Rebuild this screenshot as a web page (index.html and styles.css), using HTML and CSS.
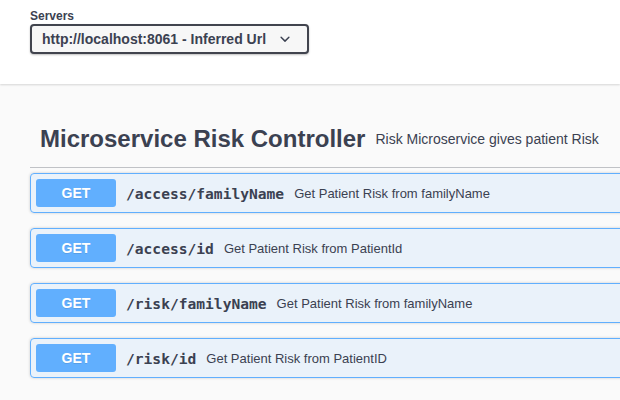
FILE: index.html
```html
<!DOCTYPE html>
<html>
<head>
<meta charset="utf-8">
<link rel="stylesheet" href="styles.css">
</head>
<body>
<section class="scheme">
  <div class="servers">
    <span class="label">Servers</span>
    <div class="select">
      <span class="select-text">http://localhost:8061 - Inferred Url</span>
      <svg class="chev" viewBox="0 0 20 20" width="20" height="20"><path d="M13.418 7.859a.695.695 0 01.978 0 .68.68 0 010 .969l-3.908 3.83a.697.697 0 01-.979 0l-3.908-3.83a.68.68 0 010-.969.695.695 0 01.978 0L10 11z" fill="#3b4151"/></svg>
    </div>
  </div>
</section>
<main class="wrapper">
  <h4 class="tag">
    <span class="tag-name">Microservice Risk Controller</span>
    <small class="tag-desc">Risk Microservice gives patient Risk</small>
  </h4>
  <div class="ops">
    <div class="op">
      <span class="method">GET</span>
      <span class="path">/access/familyName</span>
      <span class="desc">Get Patient Risk from familyName</span>
    </div>
    <div class="op">
      <span class="method">GET</span>
      <span class="path">/access/id</span>
      <span class="desc">Get Patient Risk from PatientId</span>
    </div>
    <div class="op">
      <span class="method">GET</span>
      <span class="path">/risk/familyName</span>
      <span class="desc">Get Patient Risk from familyName</span>
    </div>
    <div class="op">
      <span class="method">GET</span>
      <span class="path">/risk/id</span>
      <span class="desc">Get Patient Risk from PatientID</span>
    </div>
  </div>
</main>
</body>
</html>
```

FILE: styles.css
```css
html, body {
  margin: 0;
  padding: 0;
  background: #fafafa;
  overflow: hidden;
  font-family: "Liberation Sans", Arial, sans-serif;
  color: #3b4151;
}
.scheme {
  background: #fff;
  height: 84px;
  box-shadow: 0 1px 2px 0 rgba(0,0,0,.15);
  position: relative;
}
.servers {
  padding: 8px 0 0 30px;
  display: flex;
  flex-direction: column;
  align-items: flex-start;
}
.label {
  font-size: 12px;
  font-weight: bold;
  line-height: 16px;
}
.select {
  box-sizing: border-box;
  width: 279px;
  height: 30px;
  border: 2px solid #41444e;
  border-radius: 4px;
  background: #f7f7f7;
  box-shadow: 0 1px 2px 0 rgba(0,0,0,.25);
  display: flex;
  align-items: center;
  padding: 0 10px;
  justify-content: space-between;
}
.select-text {
  font-size: 14px;
  font-weight: bold;
}
.chev {
  margin-right: 2px;
}
.wrapper {
  padding: 27px 0 0 30px;
  overflow: hidden;
}
.tag {
  margin: 0 -10px 5px 0;
  display: flex;
  align-items: center;
  padding: 10px 20px 10px 10px;
  border-bottom: 1px solid rgba(59,65,81,.3);
  height: 36px;
}
.tag-name {
  font-size: 24px;
  font-weight: bold;
  white-space: nowrap;
}
.tag-desc {
  font-size: 14px;
  font-weight: normal;
  padding: 0 10px;
  white-space: nowrap;
}
.ops {
  display: flex;
  flex-direction: column;
  gap: 15px;
  margin-right: -10px;
  padding-bottom: 10px;
}
.op {
  display: flex;
  align-items: center;
  height: 28px;
  padding: 5px;
  border: 1px solid #61affe;
  border-radius: 4px;
  background: rgba(97,175,254,.1);
  box-shadow: 0 0 3px rgba(0,0,0,.19);
}
.method {
  width: 80px;
  height: 28px;
  line-height: 28px;
  text-align: center;
  background: #61affe;
  color: #fff;
  border-radius: 3px;
  font-size: 14px;
  font-weight: bold;
  text-shadow: 0 1px 0 rgba(0,0,0,.1);
  flex: none;
}
.path {
  font-family: "DejaVu Sans Mono", monospace;
  font-weight: bold;
  font-size: 14.6px;
  padding: 0 10px;
  color: #3b4151;
  white-space: nowrap;
}
.desc {
  font-size: 13px;
  white-space: nowrap;
}
```
